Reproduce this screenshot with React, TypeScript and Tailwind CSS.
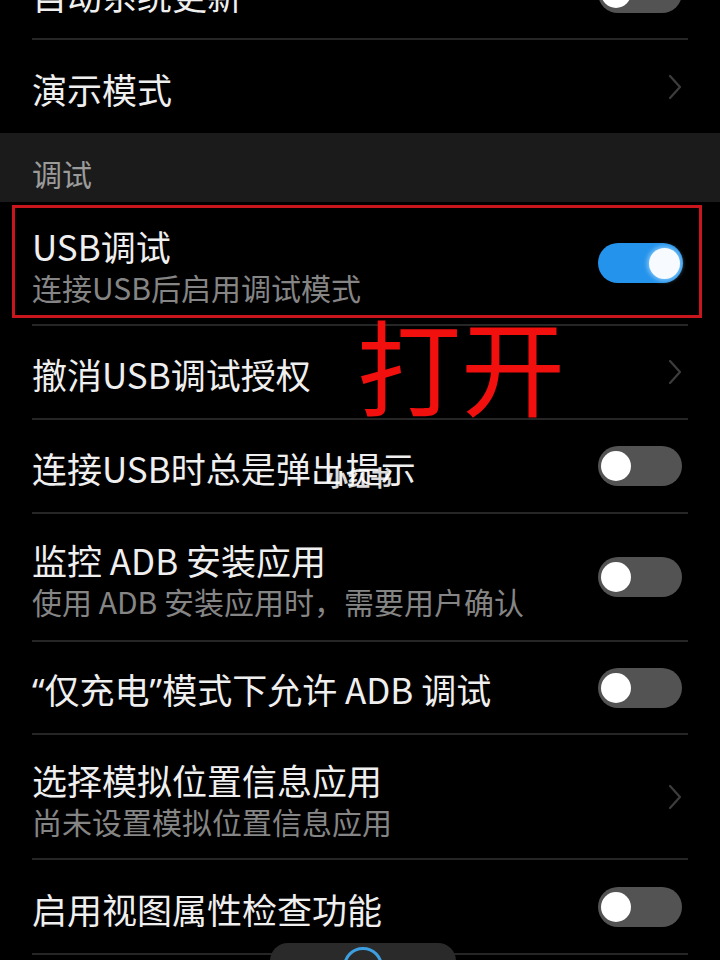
import React from "react";

type Row =
  | { kind: "toggle"; title: React.ReactNode; sub?: string; on?: boolean; h: string; line?: boolean; boxed?: boolean }
  | { kind: "link"; title: React.ReactNode; sub?: string; h: string; line?: boolean };

function Toggle({ on }: { on?: boolean }) {
  if (on) {
    return (
      <div className="mr-[5px] flex h-[40px] w-[85px] shrink-0 items-center justify-end rounded-full bg-[#2493ec] pr-[3px]">
        <div className="h-[31px] w-[31px] rounded-full bg-[#f7fbff] shadow-[0_0_4px_2px_rgba(180,225,255,0.6)]" />
      </div>
    );
  }
  return (
    <div className="mr-[6px] flex h-[40px] w-[84px] shrink-0 items-center rounded-full bg-[#535353] pl-[3px]">
      <div className="h-[30px] w-[30px] rounded-full bg-white" />
    </div>
  );
}

function Chevron() {
  return (
    <svg width="16" height="26" viewBox="0 0 16 26" className="mr-[5px] shrink-0">
      <polyline points="3,2 13,13 3,24" fill="none" stroke="#3d3d3d" strokeWidth="2.2" strokeLinecap="round" strokeLinejoin="round" />
    </svg>
  );
}

function SettingRow({ row }: { row: Row }) {
  const boxed = row.kind === "toggle" && row.boxed;
  return (
    <div className={`relative ${row.h}`}>
      {boxed && (
        <div className="absolute bottom-[8px] left-[12px] right-[18px] top-[3px] border-[3px] border-[#c9151c]" />
      )}
      <div
        className={`mx-[32px] flex h-full items-center justify-between ${row.line ? "border-b-2 border-[#262626]" : ""}`}
      >
        <div className="flex flex-col pt-[4px]">
          <div className="text-[35px] leading-[42px] text-[#efefef]">{row.title}</div>
          {row.sub && <div className="mt-[2px] text-[30px] leading-[36px] text-[#858585]">{row.sub}</div>}
        </div>
        {row.kind === "toggle" ? <Toggle on={row.on} /> : <Chevron />}
      </div>
    </div>
  );
}

const rows: Row[] = [
  { kind: "toggle", title: "连接USB时总是弹出提示", h: "h-[94px]", line: true },
  { kind: "toggle", title: "监控 ADB 安装应用", sub: "使用 ADB 安装应用时，需要用户确认", h: "h-[128px]", line: true },
  {
    kind: "toggle",
    title: (
      <>
        <span className="font-['Noto_Sans',sans-serif]">“</span>仅充电<span className="font-['Noto_Sans',sans-serif]">”</span>模式下允许 ADB 调试
      </>
    ),
    h: "h-[93px]",
    line: true,
  },
  { kind: "link", title: "选择模拟位置信息应用", sub: "尚未设置模拟位置信息应用", h: "h-[125px]", line: true },
  { kind: "toggle", title: "启用视图属性检查功能", h: "h-[95px]", line: true },
];

export default function App() {
  return (
    <div className="relative h-[960px] w-[720px] overflow-hidden bg-black font-['Noto_Sans_CJK_SC','Noto_Sans',sans-serif]">
      <div className="-mt-[53px]">
        <SettingRow row={{ kind: "toggle", title: "自动系统更新", h: "h-[93px]", line: true }} />
      </div>
      <SettingRow row={{ kind: "link", title: "演示模式", h: "h-[93px]" }} />

      <div className="h-[69px] bg-[#1b1b1b] px-[32px] pt-[22px] text-[30px] leading-[36px] text-[#9b9b9b]">调试</div>

      <SettingRow row={{ kind: "toggle", title: "USB调试", sub: "连接USB后启用调试模式", on: true, h: "h-[124px]", line: true, boxed: true }} />
      <SettingRow row={{ kind: "link", title: "撤消USB调试授权", h: "h-[94px]", line: true }} />
      {rows.map((r, i) => (
        <SettingRow key={i} row={r} />
      ))}

      {/* annotation */}
      <div className="absolute left-[357px] top-[312px] text-[104px] leading-none text-[#f2100f]">打开</div>

      {/* watermark */}
      <div className="absolute left-[326px] top-[465px] text-[22px] font-bold leading-none text-white/85">小红书</div>

      {/* nav dock */}
      <div className="absolute bottom-[-20px] left-[270px] flex h-[37px] w-[186px] justify-center rounded-t-[18px] bg-[#2a2a2a]">
        <div className="mt-[4px] h-[40px] w-[40px] rounded-full border-[3px] border-[#3d9fe0]" />
      </div>
    </div>
  );
}
